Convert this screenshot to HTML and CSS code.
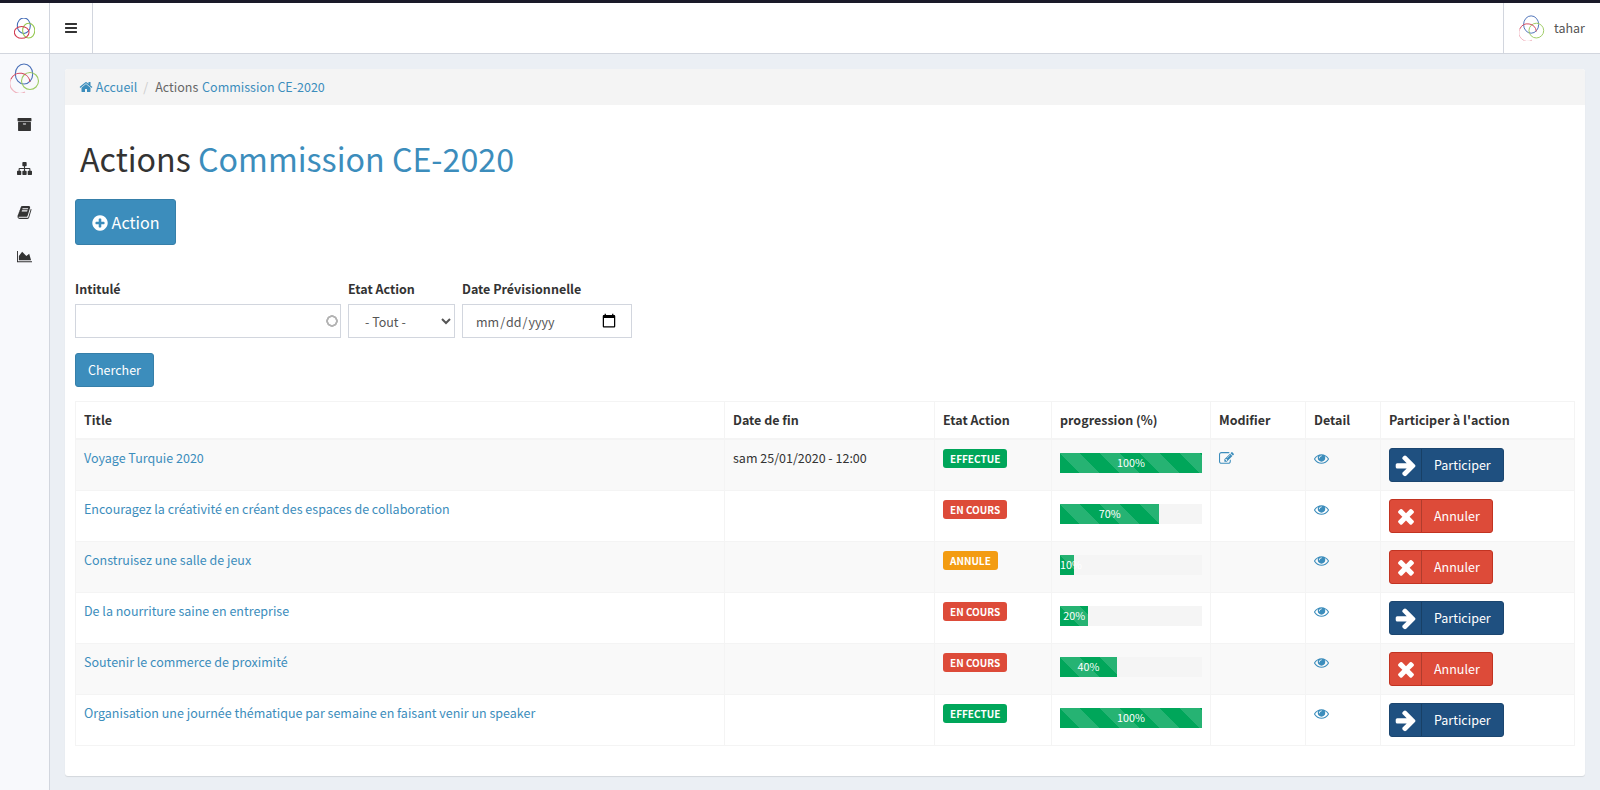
FILE: index.html
```html
<!DOCTYPE html>
<html lang="fr">
<head>
  <meta charset="UTF-8">
  <title>Actions Commission CE-2020</title>
  <link rel="stylesheet" href="styles.css">
</head>
<body>
  <svg class="defs" width="0" height="0">
    <symbol id="i-bars" viewBox="0 0 1792 1792"><path d="M1664 1344v128q0 26-19 45t-45 19h-1408q-26 0-45-19t-19-45v-128q0-26 19-45t45-19h1408q26 0 45 19t19 45zm0-512v128q0 26-19 45t-45 19h-1408q-26 0-45-19t-19-45v-128q0-26 19-45t45-19h1408q26 0 45 19t19 45zm0-512v128q0 26-19 45t-45 19h-1408q-26 0-45-19t-19-45v-128q0-26 19-45t45-19h1408q26 0 45 19t19 45z"/></symbol>
    <symbol id="i-home" viewBox="0 0 1792 1792"><path d="M1472 992v480q0 26-19 45t-45 19h-384v-384h-256v384h-384q-26 0-45-19t-19-45v-480q0-1 .5-3t.5-3l575-474 575 474q1 2 1 6zm223-69l-62 74q-8 9-21 11h-3q-13 0-21-7l-692-577-692 577q-12 8-24 7-13-2-21-11l-62-74q-8-10-7-23.500t11-21.500l719-599q32-26 76-26t76 26l244 204v-195q0-14 9-23t23-9h192q14 0 23 9t9 23v408l219 182q10 8 11 21.500t-7 23.500z"/></symbol>
    <symbol id="i-times" viewBox="0 0 1792 1792"><path d="M1490 1322q0 40-28 68l-136 136q-28 28-68 28t-68-28l-294-294-294 294q-28 28-68 28t-68-28l-136-136q-28-28-28-68t28-68l294-294-294-294q-28-28-28-68t28-68l136-136q28-28 68-28t68 28l294 294 294-294q28-28 68-28t68 28l136 136q28 28 28 68t-28 68l-294 294 294 294q28 28 28 68z"/></symbol>
    <symbol id="i-arrow" viewBox="0 0 1792 1792"><path d="M1600 960q0 54-37 91l-651 651q-39 37-91 37-51 0-90-37l-75-75q-38-38-38-91t38-91l293-293h-704q-52 0-84.500-37.500t-32.500-90.500v-128q0-53 32.500-90.500t84.500-37.500h704l-293-294q-38-36-38-90t38-90l75-75q38-38 90-38 53 0 91 38l651 651q37 35 37 90z"/></symbol>
    <symbol id="i-plus" viewBox="0 0 1792 1792"><path d="M1344 960v-128q0-26-19-45t-45-19h-256v-256q0-26-19-45t-45-19h-128q-26 0-45 19t-19 45v256h-256q-26 0-45 19t-19 45v128q0 26 19 45t45 19h256v256q0 26 19 45t45 19h128q26 0 45-19t19-45v-256h256q26 0 45-19t19-45zm320-64q0 209-103 385.500t-279.500 279.500-385.500 103-385.500-103-279.500-279.500-103-385.500 103-385.500 279.500-279.500 385.500-103 385.500 103 279.500 279.500 103 385.500z"/></symbol>
    <symbol id="i-eye" viewBox="0 0 1792 1792"><path d="M1664 960q-152-236-381-353 61 104 61 225 0 185-131.500 316.500t-316.500 131.500-316.500-131.500-131.500-316.500q0-121 61-225-229 117-381 353 133 205 333.500 326.500t434.500 121.500 434.500-121.500 333.500-326.500zm-720-384q0-20-14-34t-34-14q-125 0-214.500 89.500t-89.500 214.500q0 20 14 34t34 14 34-14 14-34q0-86 61-147t147-61q20 0 34-14t14-34zm848 384q0 34-20 69-140 230-376.500 368.500t-499.500 138.500-499.500-139-376.500-368q-20-35-20-69t20-69q140-229 376.500-368t499.500-139 499.500 139 376.500 368q20 35 20 69z"/></symbol>
    <symbol id="i-archive" viewBox="0 0 1792 1792"><path d="M1088 832q0-26-19-45t-45-19h-256q-26 0-45 19t-19 45 19 45 45 19h256q26 0 45-19t19-45zm576-192v960q0 26-19 45t-45 19h-1408q-26 0-45-19t-19-45v-960q0-26 19-45t45-19h1408q26 0 45 19t19 45zm64-448v256q0 26-19 45t-45 19h-1536q-26 0-45-19t-19-45v-256q0-26 19-45t45-19h1536q26 0 45 19t19 45z"/></symbol>
    <symbol id="i-sitemap" viewBox="0 0 1792 1792"><path d="M1792 1248v320q0 40-28 68t-68 28h-320q-40 0-68-28t-28-68v-320q0-40 28-68t68-28h96v-192h-512v192h96q40 0 68 28t28 68v320q0 40-28 68t-68 28h-320q-40 0-68-28t-28-68v-320q0-40 28-68t68-28h96v-192h-512v192h96q40 0 68 28t28 68v320q0 40-28 68t-68 28h-320q-40 0-68-28t-28-68v-320q0-40 28-68t68-28h96v-192q0-52 38-90t90-38h512v-192h-96q-40 0-68-28t-28-68v-320q0-40 28-68t68-28h320q40 0 68 28t28 68v320q0 40-28 68t-68 28h-96v192h512q52 0 90 38t38 90v192h96q40 0 68 28t28 68z"/></symbol>
    <symbol id="i-book" viewBox="0 0 1792 1792"><path d="M1703 478q40 57 18 129l-275 906q-19 64-76.500 107.500t-122.500 43.500h-923q-77 0-148.500-53.500t-99.500-131.500q-24-67-2-127 0-4 3-27t4-37q1-8-3-21.500t-3-19.500q2-11 8-21t16.500-23.500 16.500-23.500q23-38 45-91.500t30-91.500q3-10 .5-30t-.5-28q3-11 17-28t17-23q21-36 42-92t25-90q1-9-2.500-32t.5-28q4-13 22-30.500t22-22.500q19-26 42.500-84.500t27.500-96.500q1-8-3-25.500t-2-26.500q2-8 9-18t18-23 17-21q8-12 16.500-30.500t15-35 16-36 19.500-32 26.500-23.500 36-11.500 47.500 5.500l-1 3q38-9 51-9h761q74 0 114 56t18 130l-274 906q-36 119-71.500 153.500t-128.500 34.500h-869q-27 0-38 15-11 16-1 43 24 70 144 70h923q29 0 56-15.500t35-41.500l300-987q7-22 5-57 38 15 59 43zm-1064 2q-4 13 2 22.500t20 9.500h608q13 0 25.500-9.500t16.500-22.500l21-64q4-13-2-22.500t-20-9.500h-608q-13 0-25.500 9.500t-16.500 22.500zm-83 256q-4 13 2 22.500t20 9.500h608q13 0 25.500-9.500t16.500-22.500l21-64q4-13-2-22.500t-20-9.500h-608q-13 0-25.500 9.500t-16.500 22.500z"/></symbol>
    <symbol id="i-chart" viewBox="0 0 2048 1792"><path d="M2048 1536v128h-2048v-1536h128v1408h1920zm-384-1024l256 896h-1664v-576l448-576 576 576z"/></symbol>
    <symbol id="i-edit" viewBox="0 0 1792 1792"><path d="M888 1184l116-116-152-152-116 116v56h96v96h56zm440-720q-16-16-33 1l-350 350q-17 17-1 33t33-1l350-350q17-17 1-33zm80 594v190q0 119-84.500 203.500t-203.500 84.500h-832q-119 0-203.500-84.500t-84.500-203.500v-832q0-119 84.500-203.500t203.500-84.500h832q63 0 117 25 15 7 18 23 3 17-9 29l-49 49q-14 14-32 8-23-6-45-6h-832q-66 0-113 47t-47 113v832q0 66 47 113t113 47h832q66 0 113-47t47-113v-126q0-13 9-22l64-64q15-15 35-8t20 29zm-96-738l288 288-672 672h-288v-288zm444 132l-92 92-288-288 92-92q28-28 68-28t68 28l152 152q28 28 28 68t-28 68z"/></symbol>
    <symbol id="i-logo" viewBox="0 0 30 30">
      <ellipse cx="14" cy="11" rx="8.700" ry="10" fill="none" stroke="#4a70b8" stroke-width="1.100"/>
      <circle cx="20" cy="18" r="8.500" fill="none" stroke="#9ccb62" stroke-width="1.100"/>
      <path d="M20 19A10 10 0 0 0 1 16" fill="none" stroke="#d2465c" stroke-width="1.100"/>
      <path d="M1 16A10 10 0 0 0 15 29" fill="none" stroke="#efb4bf" stroke-width="1.100"/>
    </symbol>
    <symbol id="i-logo-solid" viewBox="0 0 30 30">
      <ellipse cx="14" cy="11" rx="9.300" ry="11" fill="none" stroke="#3f68b5" stroke-width="1.500"/>
      <ellipse cx="21" cy="18" rx="8.700" ry="10.500" fill="none" stroke="#96c850" stroke-width="1.500"/>
      <ellipse cx="11" cy="20.500" rx="10.500" ry="8.500" fill="none" stroke="#d2394f" stroke-width="1.500"/>
    </symbol>
  </svg>

  <header class="topbar">
    <a class="brand" href="#"><svg class="logo-small"><use href="#i-logo-solid"/></svg></a>
    <a class="toggle" href="#"><svg class="icon-bars"><use href="#i-bars"/></svg></a>
    <div class="spacer"></div>
    <a class="user" href="#"><svg class="logo-user"><use href="#i-logo"/></svg><span>tahar</span></a>
  </header>

  <div class="layout">
    <nav class="sidebar">
      <svg class="logo-side"><use href="#i-logo"/></svg>
      <a href="#"><svg class="nav-icon"><use href="#i-archive"/></svg></a>
      <a href="#"><svg class="nav-icon"><use href="#i-sitemap"/></svg></a>
      <a href="#"><svg class="nav-icon"><use href="#i-book"/></svg></a>
      <a href="#"><svg class="nav-icon"><use href="#i-chart"/></svg></a>
    </nav>

    <main class="content">
      <div class="card">
        <ol class="breadcrumb">
          <li><a href="#"><svg class="icon-home"><use href="#i-home"/></svg> Accueil</a></li>
          <li class="sep">/</li>
          <li>Actions <span class="crumb-page">Commission CE-2020</span></li>
        </ol>

        <div class="card-body">
          <h1>Actions <span class="blue">Commission CE-2020</span></h1>

          <a class="btn btn-lg" href="#"><svg class="icon-plus"><use href="#i-plus"/></svg> Action</a>

          <form class="filters">
            <div class="field">
              <label for="intitule">Intitulé</label>
              <input class="input-search" type="text" id="intitule">
            </div>
            <div class="field">
              <label for="etat">Etat Action</label>
              <select class="input-etat" id="etat"><option>- Tout -</option></select>
            </div>
            <div class="field">
              <label for="date">Date Prévisionnelle</label>
              <input class="input-date" type="date" id="date">
            </div>
          </form>

          <a class="btn btn-search" href="#">Chercher</a>

          <table class="actions">
            <colgroup>
              <col class="c-title"><col class="c-date"><col class="c-etat"><col class="c-prog"><col class="c-mod"><col class="c-det"><col class="c-part">
            </colgroup>
            <thead>
              <tr>
                <th>Title</th><th>Date de fin</th><th>Etat Action</th><th>progression (%)</th><th>Modifier</th><th>Detail</th><th>Participer à l'action</th>
              </tr>
            </thead>
            <tbody>
              <tr>
                <td><a href="#">Voyage Turquie 2020</a></td>
                <td>sam 25/01/2020 - 12:00</td>
                <td><span class="badge green">EFFECTUE</span></td>
                <td><div class="progress"><div class="bar" style="width: 100%">100%</div></div></td>
                <td><a href="#"><svg class="icon-edit"><use href="#i-edit"/></svg></a></td>
                <td><a href="#"><svg class="icon-eye"><use href="#i-eye"/></svg></a></td>
                <td><a class="btn-social part" href="#"><span class="ico"><svg><use href="#i-arrow"/></svg></span>Participer</a></td>
              </tr>
              <tr>
                <td><a href="#">Encouragez la créativité en créant des espaces de collaboration</a></td>
                <td></td>
                <td><span class="badge red">EN COURS</span></td>
                <td><div class="progress"><div class="bar" style="width: 70%">70%</div></div></td>
                <td></td>
                <td><a href="#"><svg class="icon-eye"><use href="#i-eye"/></svg></a></td>
                <td><a class="btn-social cancel" href="#"><span class="ico"><svg><use href="#i-times"/></svg></span>Annuler</a></td>
              </tr>
              <tr>
                <td><a href="#">Construisez une salle de jeux</a></td>
                <td></td>
                <td><span class="badge orange">ANNULE</span></td>
                <td><div class="progress"><div class="bar" style="width: 10%">10%</div></div></td>
                <td></td>
                <td><a href="#"><svg class="icon-eye"><use href="#i-eye"/></svg></a></td>
                <td><a class="btn-social cancel" href="#"><span class="ico"><svg><use href="#i-times"/></svg></span>Annuler</a></td>
              </tr>
              <tr>
                <td><a href="#">De la nourriture saine en entreprise</a></td>
                <td></td>
                <td><span class="badge red">EN COURS</span></td>
                <td><div class="progress"><div class="bar" style="width: 20%">20%</div></div></td>
                <td></td>
                <td><a href="#"><svg class="icon-eye"><use href="#i-eye"/></svg></a></td>
                <td><a class="btn-social part" href="#"><span class="ico"><svg><use href="#i-arrow"/></svg></span>Participer</a></td>
              </tr>
              <tr>
                <td><a href="#">Soutenir le commerce de proximité</a></td>
                <td></td>
                <td><span class="badge red">EN COURS</span></td>
                <td><div class="progress"><div class="bar" style="width: 40%">40%</div></div></td>
                <td></td>
                <td><a href="#"><svg class="icon-eye"><use href="#i-eye"/></svg></a></td>
                <td><a class="btn-social cancel" href="#"><span class="ico"><svg><use href="#i-times"/></svg></span>Annuler</a></td>
              </tr>
              <tr>
                <td><a href="#">Organisation une journée thématique par semaine en faisant venir un speaker</a></td>
                <td></td>
                <td><span class="badge green">EFFECTUE</span></td>
                <td><div class="progress"><div class="bar" style="width: 100%">100%</div></div></td>
                <td></td>
                <td><a href="#"><svg class="icon-eye"><use href="#i-eye"/></svg></a></td>
                <td><a class="btn-social part" href="#"><span class="ico"><svg><use href="#i-arrow"/></svg></span>Participer</a></td>
              </tr>
            </tbody>
          </table>
        </div>
      </div>
    </main>
  </div>
</body>
</html>
```

FILE: styles.css
```css
* {
  box-sizing: border-box;
}

body {
  margin: 0;
  height: 790px;
  overflow: hidden;
  background-color: #ebeff4;
  color: #333;
  font-family: "Noto Sans CJK JP", "Noto Sans", sans-serif;
  font-size: 12.500px;
  line-height: 20px;
}

a {
  color: #3c8dbc;
  text-decoration: none;
}

svg {
  fill: currentColor;
}

.defs {
  display: block;
  height: 0;
}

.blue {
  color: #3c8dbc;
}

/* top bar */
.topbar {
  display: flex;
  height: 54px;
  border-top: 3px solid #1a1a29;
  border-bottom: 1px solid #d2d6de;
  background-color: white;
}

.brand {
  display: flex;
  justify-content: center;
  align-items: center;
  flex: none;
  width: 50px;
  border-right: 1px solid #d2d6de;
}

.logo-small {
  width: 21px;
  height: 21px;
}

.toggle {
  display: flex;
  justify-content: center;
  align-items: center;
  flex: none;
  width: 43px;
  border-right: 1px solid #d2d6de;
  color: #333;
}

.icon-bars {
  width: 14px;
  height: 14px;
}

.spacer {
  flex: 1;
}

.user {
  display: flex;
  align-items: center;
  flex: none;
  width: 97px;
  padding-left: 15px;
  border-left: 1px solid #d2d6de;
  color: #555;
}

.logo-user {
  width: 26px;
  height: 26px;
  margin-right: 9px;
}

/* layout */
.layout {
  display: flex;
  height: 736px;
}

.sidebar {
  display: flex;
  flex-direction: column;
  align-items: center;
  flex: none;
  width: 50px;
  padding-top: 9px;
  border-right: 1px solid #d2d6de;
  background-color: #f8f9fc;
}

.sidebar a {
  display: flex;
  justify-content: center;
  align-items: center;
  height: 44px;
  color: #333;
}

.logo-side {
  width: 30px;
  height: 30px;
  margin-bottom: 9px;
}

.nav-icon {
  width: 15px;
  height: 15px;
}

.content {
  flex: 1;
  min-width: 0;
  padding: 15px 15px 14px;
}

.card {
  height: 707px;
  background-color: white;
  border-radius: 3px;
  box-shadow: 0 1px 1px rgba(0, 0, 0, 0.1);
}

/* breadcrumb */
.breadcrumb {
  display: flex;
  gap: 6px;
  height: 36px;
  margin: 0;
  padding: 8px 14px;
  list-style: none;
  background-color: #f4f4f4;
  color: #666;
  border-radius: 3px 3px 0 0;
}

.sep {
  margin-right: 1px;
  color: #ccc;
}

.crumb-page {
  margin-left: 1px;
  color: #3c8dbc;
}

.icon-home {
  width: 14px;
  height: 14px;
  vertical-align: -2px;
}

.card-body {
  padding: 0 10px;
}

h1 {
  margin: 0;
  padding: 29px 5px 16px;
  font-size: 32.200px;
  font-weight: 400;
  line-height: 49px;
  color: #333;
}

/* buttons */
.btn {
  display: inline-block;
  border: 1px solid #367fa9;
  border-radius: 3px;
  background-color: #3c8dbc;
  color: white;
}

.btn-lg {
  height: 46px;
  padding: 10px 16px;
  font-size: 16.100px;
  line-height: 24px;
}

.icon-plus {
  width: 18px;
  height: 18px;
  margin: 0 -1px;
  vertical-align: -3px;
}

.btn-search {
  display: block;
  width: 79px;
  height: 34px;
  margin-top: 15px;
  padding: 6px 12px;
}

/* filtres */
.filters {
  display: flex;
  gap: 7px;
  margin-top: 34px;
}

.field label {
  display: block;
  margin-bottom: 5px;
  font-weight: 700;
}

.field input,
.field select {
  display: block;
  height: 34px;
  padding: 6px 12px;
  border: 1px solid #d2d6de;
  border-radius: 0;
  background-color: white;
  color: #555;
  font-family: inherit;
  font-size: 12.500px;
}

.input-search {
  width: 266px;
  background-image: radial-gradient(circle at center, transparent 3.500px, #b3b3b3 4px, #b3b3b3 5.500px, transparent 6px);
  background-repeat: no-repeat;
  background-size: 14px 14px;
  background-position: right 1px center;
}

.input-etat {
  width: 107px;
}

.input-date {
  width: 170px;
}

.input-date::-webkit-calendar-picker-indicator {
  width: 16px;
  height: 16px;
  padding: 0;
  margin-right: 2px;
}

/* tableau */
.actions {
  width: 1499px;
  margin-top: 14px;
  border: 1px solid #f4f4f4;
  border-collapse: collapse;
  table-layout: fixed;
}

.c-title { width: 649px; }
.c-date { width: 210px; }
.c-etat { width: 117px; }
.c-prog { width: 159px; }
.c-mod { width: 95px; }
.c-det { width: 75px; }
.c-part { width: 194px; }

.actions th,
.actions td {
  padding: 8px;
  border: 1px solid #f4f4f4;
  text-align: left;
  vertical-align: top;
}

.actions th {
  border-bottom-width: 2px;
  font-weight: 700;
}

.actions tbody tr:nth-child(odd) {
  background-color: #f9f9f9;
}

/* etats */
.badge {
  display: inline-block;
  padding: 0 7px;
  border-radius: 3px;
  color: white;
  font-size: 10px;
  font-weight: 700;
  line-height: 19px;
}

.green { background-color: #00a65a; }
.red { background-color: #dd4b39; }
.orange { background-color: #f39c12; }

.progress {
  height: 20px;
  margin-top: 5px;
  background-color: #f5f5f5;
}

.bar {
  height: 20px;
  background-color: #00a65a;
  background-image: linear-gradient(45deg, rgba(255, 255, 255, 0.15) 25%, transparent 25%, transparent 50%, rgba(255, 255, 255, 0.15) 50%, rgba(255, 255, 255, 0.15) 75%, transparent 75%, transparent);
  background-size: 40px 40px;
  color: white;
  font-size: 10.750px;
  line-height: 20px;
  text-align: center;
  white-space: nowrap;
}

.icon-edit {
  width: 15px;
  height: 15px;
  vertical-align: -3px;
}

.icon-eye {
  width: 15px;
  height: 15px;
  vertical-align: -3px;
}

/* boutons participer / annuler */
.btn-social {
  display: inline-flex;
  align-items: center;
  height: 34px;
  padding-right: 12px;
  border: 1px solid;
  border-radius: 3px;
  color: white;
}

.ico {
  display: flex;
  justify-content: center;
  align-items: center;
  width: 32px;
  height: 32px;
  margin-right: 12px;
  border-right: 1px solid rgba(0, 0, 0, 0.2);
}

.ico svg {
  width: 24px;
  height: 24px;
}

.part {
  background-color: #1f5080;
  border-color: #1b4670;
}

.cancel {
  background-color: #dd4b39;
  border-color: #c23321;
}
```
